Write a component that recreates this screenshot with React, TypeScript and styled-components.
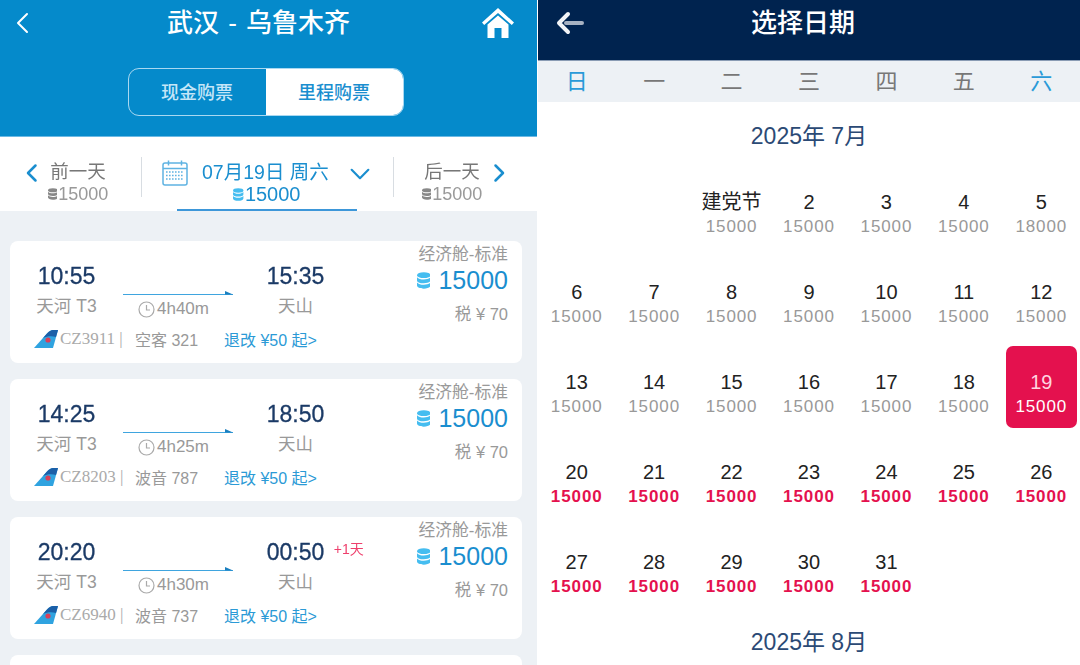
import React from 'react';
import styled, { createGlobalStyle } from 'styled-components';

const GlobalStyle = createGlobalStyle`
  html, body {
    margin: 0;
    padding: 0;
    background: #fff;
  }
  body {
    font-family: "Liberation Sans", "Noto Sans CJK SC", sans-serif;
  }
`;

const Page = styled.div`
  width: 1080px;
  height: 665px;
  display: grid;
  grid-template-columns: 537px 542px;
  column-gap: 1px;
  overflow: hidden;
  filter: blur(0.4px);
`;

const LeftPanel = styled.section`
  height: 665px;
  overflow: hidden;
  background: #edf1f5;
`;

const BlueHeader = styled.header`
  height: 136px;
  background: #058acb;
  border-bottom: 1px solid #6bb9e4;
  display: flex;
  flex-direction: column;
  align-items: center;
`;

const TitleBar = styled.div`
  width: 100%;
  box-sizing: border-box;
  height: 68px;
  padding: 8px 23px 0 12px;
  display: flex;
  justify-content: space-between;
  align-items: flex-start;
`;

const BackButton = styled.span`
  display: flex;
  margin-top: 3px;
`;

const BlueTitle = styled.h1`
  margin: 0 0 0 -1px;
  font-size: 26px;
  line-height: 30px;
  font-weight: 500;
  word-spacing: 2px;
  color: #fff;
  white-space: pre;
`;

const Segment = styled.div`
  width: 276px;
  height: 48px;
  margin-right: 6px;
  box-sizing: border-box;
  display: grid;
  grid-template-columns: 1fr 1fr;
  border: 1.5px solid #a9d8f1;
  border-radius: 11px;
  overflow: hidden;
`;

const SegmentItem = styled.div<{ $active?: boolean }>`
  display: flex;
  align-items: center;
  justify-content: center;
  padding-bottom: 2px;
  font-size: 18px;
  font-weight: 500;
  color: ${p => (p.$active ? '#1a8ecf' : '#c4e6f8')};
  background: ${p => (p.$active ? '#fff' : 'transparent')};
`;

const DateBar = styled.nav`
  height: 74px;
  background: #fff;
  display: grid;
  grid-template-columns: 141px 252px 144px;
`;

const SideDay = styled.div<{ $next?: boolean }>`
  position: relative;
  height: 40px;
  margin-top: 20px;
  padding-top: 3px;
  box-sizing: border-box;
  text-align: center;
  ${p => (p.$next ? 'border-left: 1px solid #d8dde2; padding-right: 27px;' : 'padding-left: 15px;')}
`;

const SideLabel = styled.div`
  font-size: 18.5px;
  line-height: 23px;
  color: #777;
`;

const SideMiles = styled.div`
  display: flex;
  justify-content: center;
  align-items: center;
  gap: 1px;
  height: 22px;
  font-size: 18px;
  color: #999;
`;

const SideArrow = styled.span<{ $side: 'left' | 'right' }>`
  position: absolute;
  top: 6px;
  ${p => (p.$side === 'left' ? 'left: 23px;' : 'right: 29px;')}
  display: flex;
`;

const CurrentDay = styled.div`
  position: relative;
  border-left: 1px solid #d8dde2;
  height: 40px;
  margin-top: 20px;
`;

const CurrentInner = styled.div`
  position: absolute;
  inset: -20px 36px 0 35px;
  height: 74px;
  box-sizing: border-box;
  border-bottom: 2px solid #3d97d9;
  display: flex;
  flex-direction: column;
  align-items: center;
  padding-top: 23px;
`;

const CurrentDate = styled.div`
  display: flex;
  align-items: center;
  flex: none;
  height: 23px;
  width: 208px;
  margin-right: 2px;
  font-size: 19.5px;
  color: #1a8ecf;
  white-space: pre;
`;

const CalendarSlot = styled.span`
  display: flex;
  margin-top: 2px;
`;

const CurrentText = styled.span`
  flex: 1;
  padding: 0 0 3px 14px;
`;

const ChevronSlot = styled.span`
  display: flex;
  margin-top: 5px;
`;

const CurrentMiles = styled.div`
  display: flex;
  align-items: center;
  gap: 1px;
  font-size: 20px;
  line-height: 22px;
  color: #1a8ecf;
`;

const FlightList = styled.div`
  padding: 30px 15px 0 10px;
  display: flex;
  flex-direction: column;
  gap: 16px;
`;

const Card = styled.article`
  height: 122px;
  flex: none;
  box-sizing: border-box;
  background: #fff;
  border-radius: 8px;
  display: flex;
  justify-content: space-between;
  padding: 0 14px 0 0;
`;

const CardMain = styled.div`
  display: flex;
  flex-direction: column;
`;

const Route = styled.div`
  display: grid;
  grid-template-columns: 113px 116px 113px;
  margin-top: 22px;
`;

const Stop = styled.div`
  display: flex;
  flex-direction: column;
  align-items: center;
`;

const Time = styled.div`
  position: relative;
  font-size: 23px;
  line-height: 26px;
  font-weight: 500;
  color: #1b3a66;
  -webkit-text-stroke: 0.3px #1b3a66;
`;

const NextDay = styled.span`
  position: absolute;
  left: 67px;
  top: 2px;
  white-space: nowrap;
  font-size: 14px;
  line-height: 16px;
  font-weight: 400;
  -webkit-text-stroke: 0;
  color: #ee3f6c;
`;

const Airport = styled.div`
  margin-top: 6px;
  font-size: 17.5px;
  line-height: 22px;
  color: #999;
`;

const Leg = styled.div`
  display: flex;
  flex-direction: column;
  padding-top: 28px;
`;

const Duration = styled.div`
  display: flex;
  align-items: center;
  justify-content: center;
  gap: 2px;
  margin-top: 2px;
  padding-right: 15px;
  font-size: 17px;
  line-height: 22px;
  color: #999;
`;

const Meta = styled.div`
  display: flex;
  align-items: center;
  height: 22px;
  margin-top: 8px;
  padding-left: 24px;
`;

const FlightNo = styled.span`
  margin-left: 2px;
  width: 75px;
  font-family: "Liberation Serif", serif;
  font-size: 17px;
  color: #aaa;
  white-space: nowrap;
`;

const Plane = styled.span`
  width: 89px;
  font-size: 16px;
  color: #999;
  white-space: nowrap;
`;

const Change = styled.span`
  font-size: 16px;
  color: #2b9ad6;
  white-space: nowrap;
`;

const Price = styled.div`
  display: flex;
  flex-direction: column;
  align-items: flex-end;
`;

const CabinName = styled.div`
  height: 26px;
  font-size: 16.8px;
  line-height: 28px;
  color: #999;
`;

const MilesPrice = styled.div`
  display: flex;
  align-items: center;
  gap: 8px;
  height: 26px;
  font-size: 25px;
  color: #1a8ecf;
`;

const Tax = styled.div`
  margin-top: 9px;
  font-size: 16.5px;
  line-height: 24px;
  color: #999;
`;

const RightPanel = styled.section`
  height: 665px;
  overflow: hidden;
  background: #fff;
`;

const NavyHeader = styled.header`
  position: relative;
  height: 52px;
  padding-top: 8px;
  background: #00234f;
  border-bottom: 1px solid #8a9cb4;
  display: flex;
  justify-content: center;
`;

const NavyTitle = styled.h1`
  margin: 0 0 0 -12px;
  font-size: 26px;
  line-height: 30px;
  font-weight: 500;
  color: #fff;
`;

const BackArrow = styled.span`
  position: absolute;
  left: 18px;
  top: 11px;
  display: flex;
`;

const WeekRow = styled.div`
  height: 41px;
  display: grid;
  grid-template-columns: repeat(7, 1fr);
  align-items: center;
  background: #edf1f5;
`;

const WeekDay = styled.div<{ $weekend?: boolean }>`
  text-align: center;
  font-size: 22px;
  line-height: 40px;
  font-weight: 400;
  color: ${p => (p.$weekend ? '#2a9ad8' : '#777')};
`;

const MonthTitle = styled.h2`
  margin: 0;
  height: 64px;
  display: flex;
  align-items: center;
  justify-content: center;
  font-size: 23px;
  font-weight: 400;
  color: #2b4a75;
  white-space: pre;
`;

const DayGrid = styled.div`
  display: grid;
  grid-template-columns: repeat(7, 1fr);
  row-gap: 8px;
`;

const Day = styled.div<{ $selected?: boolean; $offset?: number }>`
  ${p => (p.$offset ? `grid-column-start: ${p.$offset};` : '')}
  height: 82px;
  margin: 0 3px;
  box-sizing: border-box;
  padding-top: 24px;
  display: flex;
  flex-direction: column;
  align-items: center;
  border-radius: 7px;
  white-space: nowrap;
  background: ${p => (p.$selected ? '#e4114e' : 'transparent')};
`;

const DayNumber = styled.div<{ $selected?: boolean }>`
  font-size: 20px;
  line-height: 25px;
  color: ${p => (p.$selected ? '#ffd5e0' : '#222')};
`;

const DayPrice = styled.div<{ $tone: 'plain' | 'red' | 'inverse' }>`
  font-size: 17px;
  line-height: 24px;
  letter-spacing: 0.9px;
  font-weight: ${p => (p.$tone === 'red' ? 700 : 400)};
  color: ${p => (p.$tone === 'red' ? '#e4114e' : p.$tone === 'inverse' ? '#fff' : '#999')};
`;

const LogoMark = styled.svg`
  flex: none;
`;

const Coins = ({ color, size = 14 }: { color: string; size?: number }) => (
  <svg width={size * 0.8} height={size} viewBox="0 0 12 15" fill={color}>
    <ellipse cx="6" cy="2.8" rx="6" ry="2.6" />
    <path d="M0 4.6c1.2 1.4 3.4 2 6 2s4.800-.6 6-2v2.800c0 1.500-2.700 2.500-6 2.500s-6-1-6-2.500z" />
    <path d="M0 9.200c1.200 1.400 3.400 2 6 2s4.800-.6 6-2v2.800c0 1.500-2.700 2.800-6 2.800s-6-1.300-6-2.800z" />
  </svg>
);

const Chevron = ({ dir, color, size, width = 2.4 }: { dir: 'left' | 'right' | 'down'; color: string; size: number; width?: number }) => {
  const d = dir === 'left' ? 'M15 3 6 12l9 9' : dir === 'right' ? 'M9 3l9 9-9 9' : 'M2 7l10 10L22 7';
  return (
    <svg width={size} height={size} viewBox="0 0 24 24" fill="none" stroke={color} strokeWidth={width} strokeLinecap="round" strokeLinejoin="round">
      <path d={d} />
    </svg>
  );
};

const HomeIcon = () => (
  <svg width="32" height="30" viewBox="0 0 32 30" fill="#fff">
    <path d="M16 0 32 14.500 29.800 17 16 5 2.200 17 0 14.500z" />
    <path d="M5.500 16.500 16 7.500l10.500 9V30H19.500V20h-7v10H5.500z" />
  </svg>
);

const BackIcon = () => (
  <svg width="28" height="24" viewBox="0 0 28 24" fill="none" strokeLinecap="round" strokeLinejoin="round">
    <path d="M10 12h16" stroke="#a7b2c2" strokeWidth="4" />
    <path d="M12 3 3 12l9 9" stroke="#f2f4f7" strokeWidth="4" />
  </svg>
);

const CalendarIcon = () => (
  <svg width="26" height="26" viewBox="0 0 26 26" fill="none" stroke="#5fb3e2">
    <rect x="1" y="3" width="24" height="22" rx="2" strokeWidth="1.500" />
    <path d="M1 8.500h24M6.500 0.500v5M19.500 0.500v5" strokeWidth="1.500" />
    <path d="M4 12h18M4 15.500h18M4 19h18" strokeWidth="1.600" strokeDasharray="1.600 1.400" />
  </svg>
);

const ClockIcon = () => (
  <svg width="17" height="17" viewBox="0 0 17 17" fill="none" stroke="#aaa" strokeWidth="1.200">
    <circle cx="8.500" cy="8.500" r="7.500" />
    <path d="M8.500 4v5h3.500" />
  </svg>
);

const FlightArrow = () => (
  <svg width="110" height="5" viewBox="0 0 110 5">
    <path d="M0 3h110v1H0z" fill="#3fa5df" />
    <path d="M102 0l8 3.500h-8z" fill="#1a7fbf" />
  </svg>
);

const AirlineLogo = () => (
  <LogoMark width="24" height="18" viewBox="0 0 24 18">
    <path d="M0 18 13 3.500C15 1.300 17 0 19 0h5l-5 18z" fill="#2fa3e0" />
    <path d="M9 8 13 3.500C15 1.300 17 0 19 0h5l-2 7c-4-1.500-9-1-13 1z" fill="#1b5fa8" />
    <circle cx="14" cy="10" r="2.600" fill="#d8405a" />
  </LogoMark>
);

type Flight = {
  depart: string;
  arrive: string;
  duration: string;
  flightNo: string;
  plane: string;
  nextDay?: boolean;
};

const flights: Flight[] = [
  { depart: '10:55', arrive: '15:35', duration: '4h40m', flightNo: 'CZ3911', plane: '空客 321' },
  { depart: '14:25', arrive: '18:50', duration: '4h25m', flightNo: 'CZ8203', plane: '波音 787' },
  { depart: '20:20', arrive: '00:50', duration: '4h30m', flightNo: 'CZ6940', plane: '波音 737', nextDay: true },
];

const FlightCard = ({ flight }: { flight: Flight }) => (
  <Card>
    <CardMain>
      <Route>
        <Stop>
          <Time>{flight.depart}</Time>
          <Airport>天河 T3</Airport>
        </Stop>
        <Leg>
          <FlightArrow />
          <Duration>
            <ClockIcon />
            {flight.duration}
          </Duration>
        </Leg>
        <Stop>
          <Time>
            {flight.arrive}
            {flight.nextDay && <NextDay>+1天</NextDay>}
          </Time>
          <Airport>天山</Airport>
        </Stop>
      </Route>
      <Meta>
        <AirlineLogo />
        <FlightNo>{flight.flightNo} |</FlightNo>
        <Plane>{flight.plane}</Plane>
        <Change>退改 ¥50 起&gt;</Change>
      </Meta>
    </CardMain>
    <Price>
      <CabinName>经济舱-标准</CabinName>
      <MilesPrice>
        <Coins color="#45bdf0" size={17} />
        15000
      </MilesPrice>
      <Tax>税 ¥ 70</Tax>
    </Price>
  </Card>
);

const weekDays = ['日', '一', '二', '三', '四', '五', '六'];

const priceOf = (day: number) => (day === 5 ? 18000 : 15000);

const App: React.FC = () => (
  <Page>
    <GlobalStyle />
    <LeftPanel>
      <BlueHeader>
        <TitleBar>
          <BackButton>
            <Chevron dir="left" color="#fff" size={24} width={2} />
          </BackButton>
          <BlueTitle>武汉 - 乌鲁木齐</BlueTitle>
          <HomeIcon />
        </TitleBar>
        <Segment>
          <SegmentItem>现金购票</SegmentItem>
          <SegmentItem $active>里程购票</SegmentItem>
        </Segment>
      </BlueHeader>
      <DateBar>
        <SideDay>
          <SideArrow $side="left">
            <Chevron dir="left" color="#1a8ecf" size={20} width={3} />
          </SideArrow>
          <SideLabel>前一天</SideLabel>
          <SideMiles>
            <Coins color="#888" size={12} />
            15000
          </SideMiles>
        </SideDay>
        <CurrentDay>
          <CurrentInner>
            <CurrentDate>
              <CalendarSlot>
                <CalendarIcon />
              </CalendarSlot>
              <CurrentText>07月19日 周六</CurrentText>
              <ChevronSlot>
                <Chevron dir="down" color="#1a8ecf" size={20} width={2.600} />
              </ChevronSlot>
            </CurrentDate>
            <CurrentMiles>
              <Coins color="#45bdf0" size={13} />
              15000
            </CurrentMiles>
          </CurrentInner>
        </CurrentDay>
        <SideDay $next>
          <SideArrow $side="right">
            <Chevron dir="right" color="#1a8ecf" size={20} width={3} />
          </SideArrow>
          <SideLabel>后一天</SideLabel>
          <SideMiles>
            <Coins color="#888" size={12} />
            15000
          </SideMiles>
        </SideDay>
      </DateBar>
      <FlightList>
        {flights.map(f => (
          <FlightCard key={f.flightNo} flight={f} />
        ))}
        <Card />
      </FlightList>
    </LeftPanel>
    <RightPanel>
      <NavyHeader>
        <BackArrow>
          <BackIcon />
        </BackArrow>
        <NavyTitle>选择日期</NavyTitle>
      </NavyHeader>
      <WeekRow>
        {weekDays.map((d, i) => (
          <WeekDay key={d} $weekend={i === 0 || i === 6}>
            {d}
          </WeekDay>
        ))}
      </WeekRow>
      <MonthTitle>2025年 7月</MonthTitle>
      <DayGrid>
        {Array.from({ length: 31 }, (_, i) => i + 1).map(day => {
          const selected = day === 19;
          const tone = selected ? 'inverse' : day >= 20 ? 'red' : 'plain';
          return (
            <Day key={day} $selected={selected} $offset={day === 1 ? 3 : 0}>
              <DayNumber $selected={selected}>{day === 1 ? '建党节' : day}</DayNumber>
              <DayPrice $tone={tone}>{priceOf(day)}</DayPrice>
            </Day>
          );
        })}
      </DayGrid>
      <MonthTitle>2025年 8月</MonthTitle>
    </RightPanel>
  </Page>
);

export default App;
